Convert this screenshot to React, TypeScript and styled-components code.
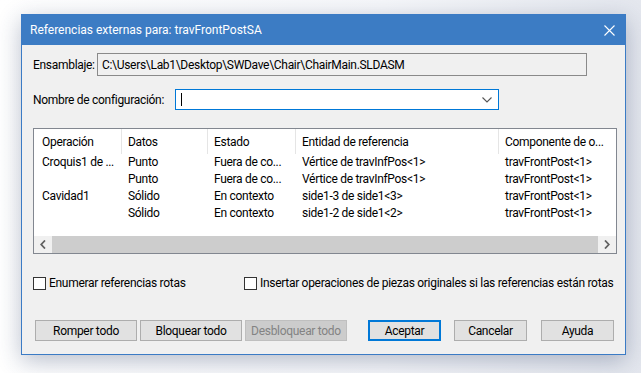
import React from 'react';
import styled, { createGlobalStyle } from 'styled-components';

const GlobalStyle = createGlobalStyle`
  html, body {
    margin: 0;
    padding: 0;
    background: #ffffff;
  }
  body {
    font-family: Roboto, "Noto Sans", sans-serif;
    font-size: 12px;
    line-height: 16px;
    letter-spacing: -0.3px;
    color: #000;
  }
`;

const Page = styled.div`
  width: 641px;
  height: 373px;
  padding: 14px 0 0 21px;
  box-sizing: border-box;
  background: linear-gradient(90deg, #ffffff 0%, #f6f7fa 60%, #e4e7ee 100%);
`;

const Dialog = styled.div`
  width: 605px;
  height: 341px;
  box-sizing: border-box;
  border: 1px solid #3b7bc5;
  background: #f0f0f0;
  box-shadow: 0 6px 22px rgba(40, 60, 100, 0.32);
  display: flex;
  flex-direction: column;
`;

const TitleBar = styled.div`
  height: 30px;
  background: #3c7cc4;
  color: #fff;
  display: flex;
  align-items: center;
  justify-content: space-between;
  padding: 0 10px 0 8px;
  font-size: 12px;
  letter-spacing: 0;
`;

const CloseButton = styled.div`
  width: 12px;
  height: 12px;
  display: flex;
  align-items: center;
  justify-content: center;
`;

const Content = styled.div`
  padding: 8px 8px 0 11px;
  display: flex;
  flex-direction: column;
`;

const FieldRow = styled.div<{ $mt?: number }>`
  display: flex;
  align-items: center;
  margin-top: ${(p) => p.$mt ?? 0}px;
`;

const Label = styled.span<{ $w: number }>`
  width: ${(p) => p.$w}px;
  flex-shrink: 0;
  white-space: nowrap;
`;

const ReadOnlyField = styled.div`
  width: 490px;
  height: 23px;
  box-sizing: border-box;
  border: 1px solid #8a8a8a;
  background: #f0f0f0;
  padding-left: 4px;
  display: flex;
  align-items: center;
`;

const Combo = styled.div`
  width: 324px;
  height: 21px;
  box-sizing: border-box;
  border: 1px solid #0078d7;
  background: #fff;
  display: flex;
  align-items: center;
  justify-content: space-between;
  padding: 0 6px 0 5px;
`;

const Caret = styled.div`
  width: 1px;
  height: 13px;
  background: #000;
`;

const List = styled.div`
  margin-top: 18px;
  width: 584px;
  height: 126px;
  box-sizing: border-box;
  border: 1px solid #828790;
  background: #fff;
  display: flex;
  flex-direction: column;
  justify-content: space-between;
`;

const Grid = styled.div`
  display: grid;
  grid-template-columns: 88px 86px 88px 203px 1fr;
`;

const HeaderCell = styled.div<{ $last?: boolean }>`
  height: 25px;
  display: flex;
  align-items: center;
  padding-left: 6px;
  border-right: ${(p) => (p.$last ? 'none' : '1px solid #e5e5e5')};
  white-space: nowrap;
  overflow: hidden;
`;

const Cell = styled.div`
  height: 17px;
  line-height: 17px;
  padding-left: 6px;
  white-space: nowrap;
  overflow: hidden;
`;

const FirstCol = styled.div`
  padding-left: 2px;
`;

const ScrollBar = styled.div`
  height: 17px;
  display: flex;
  background: #f0f0f0;
`;

const ScrollArrow = styled.div`
  width: 18px;
  display: flex;
  align-items: center;
  justify-content: center;
`;

const ScrollThumb = styled.div`
  flex: 1;
  background: #cdcdcd;
`;

const CheckRow = styled.div`
  margin-top: 21px;
  height: 16px;
  display: flex;
  align-items: center;
`;

const CheckItem = styled.label<{ $w?: number }>`
  display: flex;
  align-items: center;
  width: ${(p) => (p.$w ? `${p.$w}px` : 'auto')};
  flex-shrink: 0;
  white-space: nowrap;
`;

const Box = styled.span`
  width: 13px;
  height: 13px;
  box-sizing: border-box;
  border: 1px solid #333;
  background: #fff;
  margin-right: 3px;
  flex-shrink: 0;
`;

const ButtonRow = styled.div`
  margin-top: 29px;
  margin-left: 2px;
  display: flex;
  align-items: center;
`;

const Button = styled.div<{ $ml?: number; $primary?: boolean; $disabled?: boolean }>`
  margin-left: ${(p) => p.$ml ?? 0}px;
  width: 102px;
  height: 21px;
  box-sizing: border-box;
  display: flex;
  align-items: center;
  justify-content: center;
  background: ${(p) => (p.$disabled ? '#cccccc' : '#e1e1e1')};
  border: ${(p) =>
    p.$primary ? '2px solid #0078d7' : p.$disabled ? '1px solid #bfbfbf' : '1px solid #adadad'};
  color: ${(p) => (p.$disabled ? '#838383' : '#000')};
  white-space: nowrap;
`;

const NarrowButton = styled(Button)`
  width: 73px;
`;

const rows = [
  ['Croquis1  de ...', 'Punto', 'Fuera de co...', 'Vértice de travInfPos<1>', 'travFrontPost<1>'],
  ['', 'Punto', 'Fuera de co...', 'Vértice de travInfPos<1>', 'travFrontPost<1>'],
  ['Cavidad1', 'Sólido', 'En contexto', 'side1-3 de side1<3>', 'travFrontPost<1>'],
  ['', 'Sólido', 'En contexto', 'side1-2 de side1<2>', 'travFrontPost<1>'],
];

const headers = ['Operación', 'Datos', 'Estado', 'Entidad de referencia', 'Componente de o...'];

export default function App() {
  return (
    <>
      <GlobalStyle />
      <Page>
        <Dialog>
          <TitleBar>
            <span>Referencias externas para: travFrontPostSA</span>
            <CloseButton>
              <svg width="11" height="11" viewBox="0 0 11 11">
                <path d="M0.5 0.5 L10.5 10.5 M10.5 0.5 L0.5 10.5" stroke="#fff" strokeWidth="1.1" />
              </svg>
            </CloseButton>
          </TitleBar>
          <Content>
            <FieldRow>
              <Label $w={64}>Ensamblaje:</Label>
              <ReadOnlyField>C:\Users\Lab1\Desktop\SWDave\Chair\ChairMain.SLDASM</ReadOnlyField>
            </FieldRow>
            <FieldRow $mt={13}>
              <Label $w={142}>Nombre de configuración:</Label>
              <Combo>
                <Caret />
                <svg width="10" height="6" viewBox="0 0 10 6">
                  <path d="M0.5 0.5 L5 5 L9.5 0.5" stroke="#555" strokeWidth="1.1" fill="none" />
                </svg>
              </Combo>
            </FieldRow>
            <List>
              <Grid>
                {headers.map((h, i) => (
                  <HeaderCell key={h} $last={i === headers.length - 1}>
                    {i === 0 ? <FirstCol>{h}</FirstCol> : h}
                  </HeaderCell>
                ))}
                {rows.map((r, ri) =>
                  r.map((c, ci) => (
                    <Cell key={`${ri}-${ci}`}>{ci === 0 ? <FirstCol>{c}</FirstCol> : c}</Cell>
                  ))
                )}
              </Grid>
              <ScrollBar>
                <ScrollArrow>
                  <svg width="6" height="9" viewBox="0 0 6 9">
                    <path d="M5 0.5 L1.2 4.5 L5 8.5" stroke="#606060" strokeWidth="1.8" fill="none" />
                  </svg>
                </ScrollArrow>
                <ScrollThumb />
                <ScrollArrow>
                  <svg width="6" height="9" viewBox="0 0 6 9">
                    <path d="M1 0.5 L4.8 4.5 L1 8.5" stroke="#606060" strokeWidth="1.8" fill="none" />
                  </svg>
                </ScrollArrow>
              </ScrollBar>
            </List>
            <CheckRow>
              <CheckItem $w={211}>
                <Box />
                Enumerar referencias rotas
              </CheckItem>
              <CheckItem>
                <Box />
                Insertar operaciones de piezas originales si las referencias están rotas
              </CheckItem>
            </CheckRow>
            <ButtonRow>
              <Button>Romper todo</Button>
              <Button $ml={3}>Bloquear todo</Button>
              <Button $ml={3} $disabled>
                Desbloquear todo
              </Button>
              <NarrowButton $ml={21} $primary>
                Aceptar
              </NarrowButton>
              <NarrowButton $ml={13}>Cancelar</NarrowButton>
              <NarrowButton $ml={14}>Ayuda</NarrowButton>
            </ButtonRow>
          </Content>
        </Dialog>
      </Page>
    </>
  );
}
